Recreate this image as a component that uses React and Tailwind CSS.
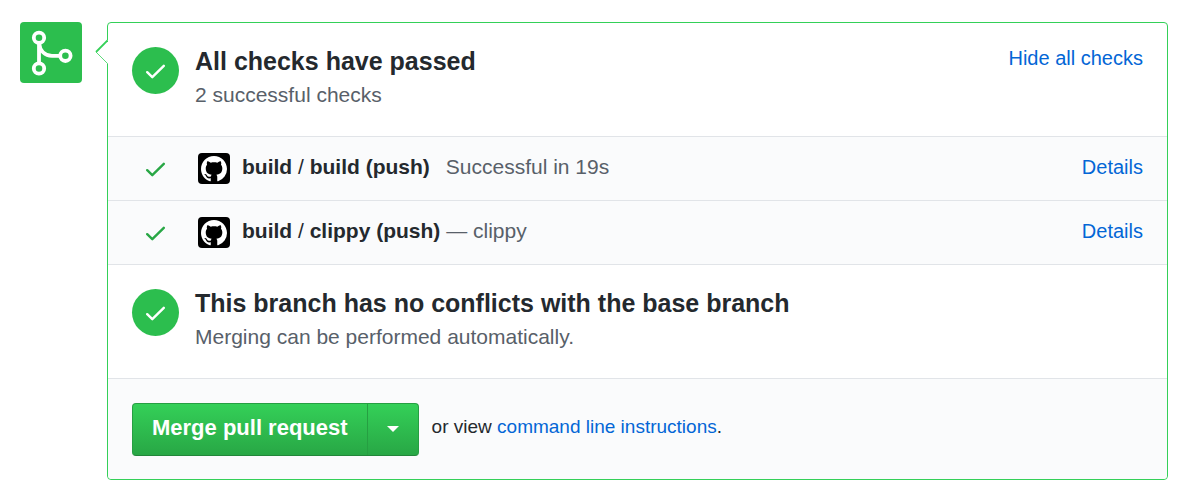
import React from "react";

function Check({ className }) {
  return (
    <svg viewBox="0 0 20 16" className={className} fill="none" stroke="currentColor" strokeWidth="2.4" strokeLinecap="round" strokeLinejoin="round" aria-hidden="true">
      <path d="M1.2 9.200 L6.300 14.200 L17.800 2.800" />
    </svg>
  );
}

function MergeIcon() {
  return (
    <svg viewBox="0 0 62 61" className="h-[61px] w-[62px]" fill="none" stroke="white" strokeWidth="3.8" aria-hidden="true">
      <circle cx="19" cy="15.8" r="5.2" />
      <circle cx="19" cy="46.5" r="5.2" />
      <circle cx="45.4" cy="33.8" r="5.2" />
      <path d="M19 21v20.5M19 21c1 8 6 12.800 13 12.800h8" />
    </svg>
  );
}

function GithubAvatar() {
  return (
    <span className="flex h-[31px] w-8 shrink-0 items-center justify-center rounded bg-black text-white">
      <svg viewBox="0 0 16 16" className="h-[26px] w-[26px]" fill="currentColor" aria-hidden="true">
        <path d="M8 0C3.58 0 0 3.58 0 8c0 3.54 2.29 6.53 5.47 7.59.4.07.55-.17.55-.38 0-.19-.01-.82-.01-1.49-2.01.37-2.53-.49-2.69-.94-.09-.23-.48-.94-.82-1.13-.28-.15-.68-.52-.01-.53.63-.01 1.08.58 1.23.82.72 1.21 1.87.87 2.33.66.07-.52.28-.87.51-1.07-1.78-.2-3.64-.89-3.64-3.95 0-.87.31-1.59.82-2.15-.08-.2-.36-1.02.08-2.12 0 0 .67-.21 2.2.82.64-.18 1.32-.27 2-.27s1.36.09 2 .27c1.53-1.04 2.2-.82 2.2-.82.44 1.1.16 1.92.08 2.12.51.56.82 1.27.82 2.15 0 3.07-1.87 3.75-3.65 3.95.29.25.54.73.54 1.48 0 1.07-.01 1.93-.01 2.2 0 .21.15.46.55.38A8.013 8.013 0 0 0 16 8c0-4.42-3.58-8-8-8z" />
      </svg>
    </span>
  );
}

function StatusSection({ title, detail, children }) {
  return (
    <section className="flex items-start px-6 py-6">
      <span className="flex size-[47px] shrink-0 items-center justify-center rounded-full bg-[#2cbe4e] text-white">
        <Check className="h-4 w-5" />
      </span>
      <div className="ml-4 grow">
        <h2 className="text-[25px] leading-7 font-bold">{title}</h2>
        <p className="mt-1 text-[21px] leading-8 text-[#586069]">{detail}</p>
      </div>
      {children}
    </section>
  );
}

function CheckRow({ job, children }) {
  return (
    <li className="flex h-16 items-center border-t border-[#e1e4e8] bg-[#fafbfc] px-6 text-[21px] leading-8">
      <span className="flex w-[47px] shrink-0 justify-center text-[#28a745]">
        <Check className="h-4 w-5" />
      </span>
      <span className="ml-[19px] flex">
        <GithubAvatar />
      </span>
      <p className="ml-3 grow pb-1 text-[#586069]">
        <span className="text-[#24292e]">
          <strong>build</strong> / <strong>{job} (push)</strong>
        </span>
        {children}
      </p>
      <a href="#details" className="pb-1 text-[20px] text-[#0366d6]">Details</a>
    </li>
  );
}

export default function App() {
  return (
    <main className="flex items-start bg-white pt-[22px] pr-[19px] pb-3 pl-5 font-['Liberation_Sans',Arial,sans-serif] text-[#24292e]">
      <div className="shrink-0 rounded bg-[#2cbe4e]">
        <MergeIcon />
      </div>
      <div className="relative ml-[25px] grow rounded border border-[#34d058]">
        <svg viewBox="0 0 13 26" className="absolute top-4 -left-[13px] h-[26px] w-[13px]" aria-hidden="true">
          <path d="M13 1L1 13L13 25" fill="white" />
          <path d="M12.5 1.5L1 13" fill="none" stroke="#34d058" strokeWidth="1.8" />
          <path d="M1 13L12.5 24.5" fill="none" stroke="#34d058" strokeWidth="0.8" />
        </svg>
        <div className="h-[113px]">
          <StatusSection title="All checks have passed" detail="2 successful checks">
            <button type="button" className="text-[20px] leading-[22px] text-[#0366d6]">Hide all checks</button>
          </StatusSection>
        </div>
        <ul className="border-b border-[#e1e4e8]">
          <CheckRow job="build">
            <span className="ml-4">Successful in 19s</span>
          </CheckRow>
          <CheckRow job="clippy"> — clippy</CheckRow>
        </ul>
        <div className="h-[113px]">
          <StatusSection title="This branch has no conflicts with the base branch" detail="Merging can be performed automatically." />
        </div>
        <footer className="flex items-center rounded-b border-t border-[#e1e4e8] bg-[#fafbfc] px-6 pt-6 pb-[23px]">
          <div className="flex h-[53px] shrink-0 overflow-hidden rounded border border-[#269f42] border-b-[#22863a] bg-linear-to-b from-[#34d058] to-[#28a745] text-white">
            <button type="button" className="px-[19px] pb-1 text-[22px] leading-8 font-bold">Merge pull request</button>
            <button type="button" aria-label="Select merge method" className="flex w-[51px] items-center justify-center border-l border-[#269f42] pb-0.5">
              <svg viewBox="0 0 12 6" className="h-1.5 w-3" fill="currentColor" aria-hidden="true">
                <path d="M0 0h12L6 6z" />
              </svg>
            </button>
          </div>
          <p className="ml-[13px] pb-1.5 text-[19px] leading-7">
            or view <a href="#command-line" className="text-[#0366d6]">command line instructions</a>.
          </p>
        </footer>
      </div>
    </main>
  );
}
